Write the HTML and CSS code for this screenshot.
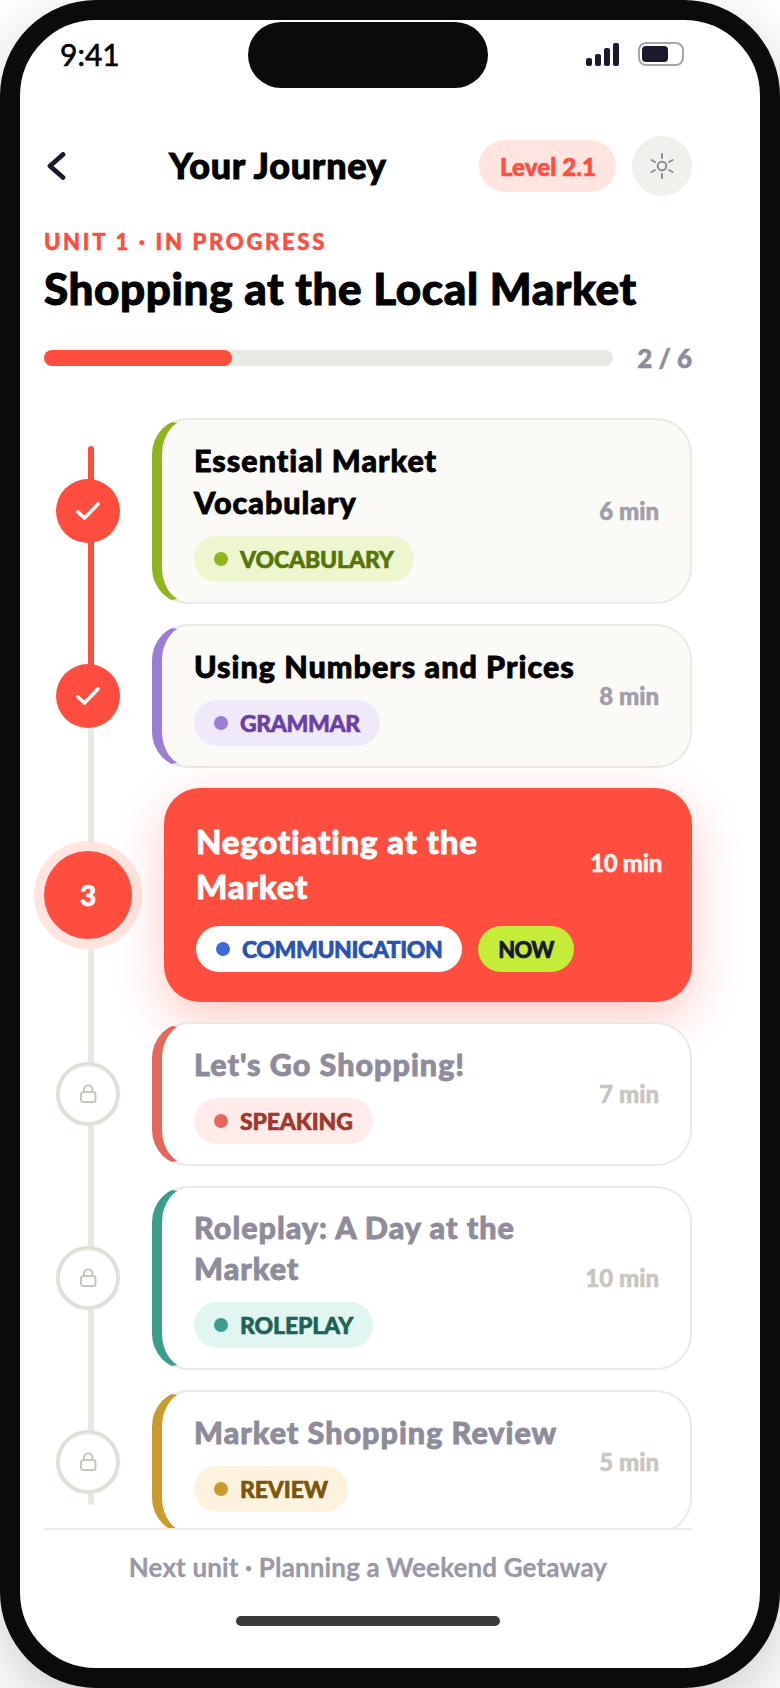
FILE: index.html
```html
<!DOCTYPE html>
<html lang="en">
<head>
<meta charset="utf-8">
<title>Your Journey</title>
<link rel="stylesheet" href="styles.css">
</head>
<body>
<div class="phone">
  <div class="notch"></div>
  <div class="screen">
    <div class="status">
      <span class="clock">9:41</span>
      <div class="status-icons">
        <div class="signal"><i class="b1"></i><i class="b2"></i><i class="b3"></i><i class="b4"></i></div>
        <div class="battery"><i></i></div>
      </div>
    </div>
    <header class="topbar">
      <svg class="back" width="20" height="28" viewBox="0 0 20 28"><path d="M17 2.500 4 14l13 11.500" fill="none" stroke="#1a1a2e" stroke-width="4.800" stroke-linecap="round" stroke-linejoin="round"/></svg>
      <h1 class="title">Your Journey</h1>
      <span class="level">Level 2.1</span>
      <div class="sun">
        <svg width="26" height="28" viewBox="0 0 26 28" fill="none" stroke="#8e8c9a" stroke-width="2" stroke-linecap="round"><circle cx="13" cy="14" r="4.300"/><path d="M13 2v4M13 22v4M2.500 8l3.400 2M20.100 18l3.400 2M2.500 20l3.400-2M20.100 10l3.400-2"/></svg>
      </div>
    </header>
    <section class="unit">
      <div class="eyebrow">UNIT 1 · IN PROGRESS</div>
      <h2 class="unit-title">Shopping at the Local Market</h2>
      <div class="progress">
        <div class="track"><div class="fill"></div></div>
        <span class="count">2 / 6</span>
      </div>
    </section>
    <main class="list">
      <div class="line line-gray"></div>
      <div class="line line-red"></div>

      <div class="row">
        <div class="node-col"><div class="node done"><svg width="26" height="20" viewBox="0 0 26 20"><path d="M3 11l6.500 6L23 3" fill="none" stroke="#fff" stroke-width="3.600" stroke-linecap="round" stroke-linejoin="round"/></svg></div></div>
        <article class="card past green">
          <div class="body"><div class="name">Essential Market Vocabulary</div>
            <div class="chips"><span class="chip"><i class="dot"></i>VOCABULARY</span></div></div>
          <span class="time">6 min</span>
        </article>
      </div>

      <div class="row">
        <div class="node-col"><div class="node done"><svg width="26" height="20" viewBox="0 0 26 20"><path d="M3 11l6.500 6L23 3" fill="none" stroke="#fff" stroke-width="3.600" stroke-linecap="round" stroke-linejoin="round"/></svg></div></div>
        <article class="card past purple">
          <div class="body"><div class="name">Using Numbers and Prices</div>
            <div class="chips"><span class="chip"><i class="dot"></i>GRAMMAR</span></div></div>
          <span class="time">8 min</span>
        </article>
      </div>

      <div class="row">
        <div class="node-col"><div class="node current">3</div></div>
        <article class="card active blue">
          <div class="body"><div class="name">Negotiating at the Market</div>
            <div class="chips"><span class="chip"><i class="dot"></i>COMMUNICATION</span><span class="chip now">NOW</span></div></div>
          <span class="time">10 min</span>
        </article>
      </div>

      <div class="row">
        <div class="node-col"><div class="node locked"><svg width="18" height="22" viewBox="0 0 18 22" fill="none" stroke="#c8c5bd" stroke-width="2"><rect x="2" y="9" width="14.500" height="10" rx="2.500"/><path d="M5 9V6.500a4.200 4.200 0 0 1 8.400 0V9"/></svg></div></div>
        <article class="card future red">
          <div class="body"><div class="name">Let's Go Shopping!</div>
            <div class="chips"><span class="chip"><i class="dot"></i>SPEAKING</span></div></div>
          <span class="time">7 min</span>
        </article>
      </div>

      <div class="row">
        <div class="node-col"><div class="node locked"><svg width="18" height="22" viewBox="0 0 18 22" fill="none" stroke="#c8c5bd" stroke-width="2"><rect x="2" y="9" width="14.500" height="10" rx="2.500"/><path d="M5 9V6.500a4.200 4.200 0 0 1 8.400 0V9"/></svg></div></div>
        <article class="card future teal">
          <div class="body"><div class="name">Roleplay: A Day at the Market</div>
            <div class="chips"><span class="chip"><i class="dot"></i>ROLEPLAY</span></div></div>
          <span class="time">10 min</span>
        </article>
      </div>

      <div class="row">
        <div class="node-col"><div class="node locked"><svg width="18" height="22" viewBox="0 0 18 22" fill="none" stroke="#c8c5bd" stroke-width="2"><rect x="2" y="9" width="14.500" height="10" rx="2.500"/><path d="M5 9V6.500a4.200 4.200 0 0 1 8.400 0V9"/></svg></div></div>
        <article class="card future gold">
          <div class="body"><div class="name">Market Shopping Review</div>
            <div class="chips"><span class="chip"><i class="dot"></i>REVIEW</span></div></div>
          <span class="time">5 min</span>
        </article>
      </div>
    </main>
    <footer class="next">Next unit · Planning a Weekend Getaway</footer>
    <div class="home-wrap"><div class="home"></div></div>
  </div>
</div>
</body>
</html>
```
FILE: styles.css
```css
* { box-sizing: border-box; }
html, body { margin: 0; padding: 0; }
body {
  width: 780px;
  height: 1688px;
  overflow: hidden;
  background: #fff;
  font-family: "Lato", "Noto Sans", sans-serif;
  color: #000;
}
.phone {
  position: relative;
  width: 780px;
  height: 1688px;
  border: 20px solid #0b0b0d;
  border-radius: 96px;
  background: #fff;
  box-shadow: 0 20px 60px rgba(0, 0, 0, .2);
  overflow: hidden;
}
.notch {
  position: absolute;
  left: 228px;
  top: 2px;
  width: 240px;
  height: 66px;
  border-radius: 33px;
  background: #0b0b0d;
  z-index: 5;
}
.screen {
  display: flex;
  flex-direction: column;
  height: 1648px;
}
.status {
  display: flex;
  align-items: center;
  justify-content: space-between;
  flex: none;
  height: 68px;
  padding: 0 76px 0 40px;
}
.clock { font-size: 30px; font-weight: 400; -webkit-text-stroke: .6px; }
.status-icons { display: flex; align-items: center; gap: 19px; }
.signal { display: flex; align-items: flex-end; gap: 3px; height: 24px; }
.signal i { display: block; width: 6px; border-radius: 2px; background: #1a1a2e; }
.signal .b1 { height: 8px; }
.signal .b2 { height: 12px; }
.signal .b3 { height: 18px; }
.signal .b4 { height: 23px; }
.battery {
  width: 46px;
  height: 24px;
  border: 2px solid #a5a5ad;
  border-radius: 8px;
  padding: 2px;
}
.battery i { display: block; width: 26px; height: 100%; background: #1a1a2e; border-radius: 4px; }
.topbar {
  display: flex;
  align-items: center;
  flex: none;
  height: 60px;
  margin-top: 48px;
  padding: 0 68px 0 26px;
}
.back { flex: none; }
.title {
  margin: -2px 0 0 103px;
  flex: 1;
  font-size: 36px;
  font-weight: 900;
  line-height: 44px;
  letter-spacing: .7px;
  -webkit-text-stroke: .9px;
}
.level {
  display: flex;
  align-items: center;
  height: 52px;
  padding: 0 20px 0 21px;
  border-radius: 26px;
  background: #ffe4e0;
  color: #ff4d3f;
  font-size: 24px;
  font-weight: 900;
  letter-spacing: .1px;
  -webkit-text-stroke: .6px;
}
.sun {
  display: flex;
  align-items: center;
  justify-content: center;
  width: 60px;
  height: 60px;
  margin-left: 16px;
  border-radius: 50%;
  background: #f1f0ec;
}
.unit { flex: none; padding: 0 68px 0 24px; margin-top: 32px; }
.eyebrow {
  color: #ff4d3f;
  font-size: 22px;
  font-weight: 900;
  line-height: 28px;
  letter-spacing: 2.700px;
  -webkit-text-stroke: .5px;
}
.unit-title {
  margin: 6px 0 0;
  font-size: 44px;
  font-weight: 900;
  line-height: 52px;
  letter-spacing: .6px;
  -webkit-text-stroke: 1px;
}
.progress { display: flex; align-items: center; gap: 24px; margin-top: 32px; height: 24px; }
.track { flex: 1; height: 16px; border-radius: 8px; background: #eae8e2; }
.fill { width: 33%; height: 100%; border-radius: 8px; background: #ff4d3f; }
.count { color: #8e8c9a; font-size: 26px; font-weight: 900; -webkit-text-stroke: .6px; }
.list {
  position: relative;
  flex: 1;
  min-height: 0;
  overflow: hidden;
  display: flex;
  flex-direction: column;
  gap: 20px;
  margin: 48px 0 0;
  padding: 0 68px 0 24px;
}
.line {
  position: absolute;
  left: 68px;
  top: 28px;
  width: 6px;
  border-radius: 3px;
}
.line-gray { height: 1059px; background: #eae8e2; }
.line-red { height: 250px; background: #ff4d3f; }
.row { position: relative; display: flex; align-items: center; gap: 20px; flex: none; }
.node-col { flex: none; width: 88px; display: flex; justify-content: center; }
.node {
  display: flex;
  align-items: center;
  justify-content: center;
  width: 64px;
  height: 64px;
  border-radius: 50%;
}
.node.done { background: #ff4d3f; }
.node.current {
  width: 88px;
  height: 88px;
  background: #ff4d3f;
  box-shadow: 0 0 0 10px #ffe4e0;
  color: #fff;
  font-size: 28px;
  font-weight: 900;
  -webkit-text-stroke: .6px;
}
.node.locked { background: #fff; border: 4px solid #e0dfd8; }
.card {
  flex: 1;
  display: flex;
  align-items: center;
  gap: 12px;
  min-width: 0;
  padding: 20px 31px 20px 32px;
  border: 2px solid #ebe9e3;
  border-left: 10px solid;
  border-radius: 36px;
  background: #fff;
}
.card.past { background: #fbfaf6; }
.card.active {
  margin-left: 12px;
  padding: 32px 30px 30px 32px;
  border: 0;
  background: #ff4d3f;
  box-shadow: 0 16px 48px rgba(255, 77, 63, .3);
}
.body { flex: 1; min-width: 0; }
.name {
  margin-top: -1px;
  font-size: 30.500px;
  font-weight: 900;
  line-height: 42px;
  letter-spacing: 1px;
  -webkit-text-stroke: .8px;
}
.past .name { color: #000; }
.future .name { color: #8e8c9a; }
.teal .name { line-height: 41px; }
.active .name { color: #fff; font-size: 33px; line-height: 45px; letter-spacing: .8px; }
.chips { display: flex; gap: 16px; margin-top: 13px; }
.active .chips { margin-top: 17px; }
.chip {
  display: flex;
  align-items: center;
  gap: 12px;
  height: 46px;
  padding: 0 20px;
  border-radius: 23px;
  font-size: 23px;
  font-weight: 900;
  letter-spacing: -.15px;
  -webkit-text-stroke: .6px;
  white-space: nowrap;
}
.dot { display: block; width: 14px; height: 14px; border-radius: 50%; }
.time { flex: none; margin-top: -2px; font-size: 24px; font-weight: 900; -webkit-text-stroke: .5px; }
.past .time { color: #a09ea8; }
.future .time { color: #c8c5bd; }
.active .time {
  align-self: flex-start;
  margin-top: 28px;
  color: #fff1ee;
  letter-spacing: -.3px;
}

.green { border-left-color: #8fb321; }
.green .chip { background: #eef6cf; color: #55740a; }
.green .dot { background: #8fb321; }
.purple { border-left-color: #9b7dd4; }
.purple .chip { background: #f0e9fa; color: #6b3fa8; letter-spacing: -.4px; }
.purple .dot { background: #9b7dd4; }
.blue .chip { background: #fff; color: #2a52b0; letter-spacing: -.45px; }
.blue .chip.now { background: #c5ec38; color: #1a1a2e; font-size: 22px; letter-spacing: -.8px; }
.blue .dot { background: #4169d8; }
.red { border-left-color: #e4675c; }
.red .chip { background: #ffecea; color: #a0362c; }
.red .dot { background: #e4675c; }
.teal { border-left-color: #3d9d8c; }
.teal .chip { background: #e1f5f1; color: #1d6355; }
.teal .dot { background: #3d9d8c; }
.gold { border-left-color: #cb9a2e; }
.gold .chip { background: #fdf2de; color: #7a560c; }
.gold .dot { background: #cb9a2e; }
.next {
  flex: none;
  margin: 0 68px 0 24px;
  height: 76px;
  display: flex;
  align-items: center;
  justify-content: center;
  border-top: 2px solid #eeece6;
  color: #9a98a4;
  font-size: 26px;
  font-weight: 700;
  letter-spacing: .15px;
  -webkit-text-stroke: .3px;
}
.home-wrap { flex: none; height: 64px; padding: 12px 0 0 216px; }
.home { width: 264px; height: 10px; border-radius: 5px; background: #3a3a3c; }
```
